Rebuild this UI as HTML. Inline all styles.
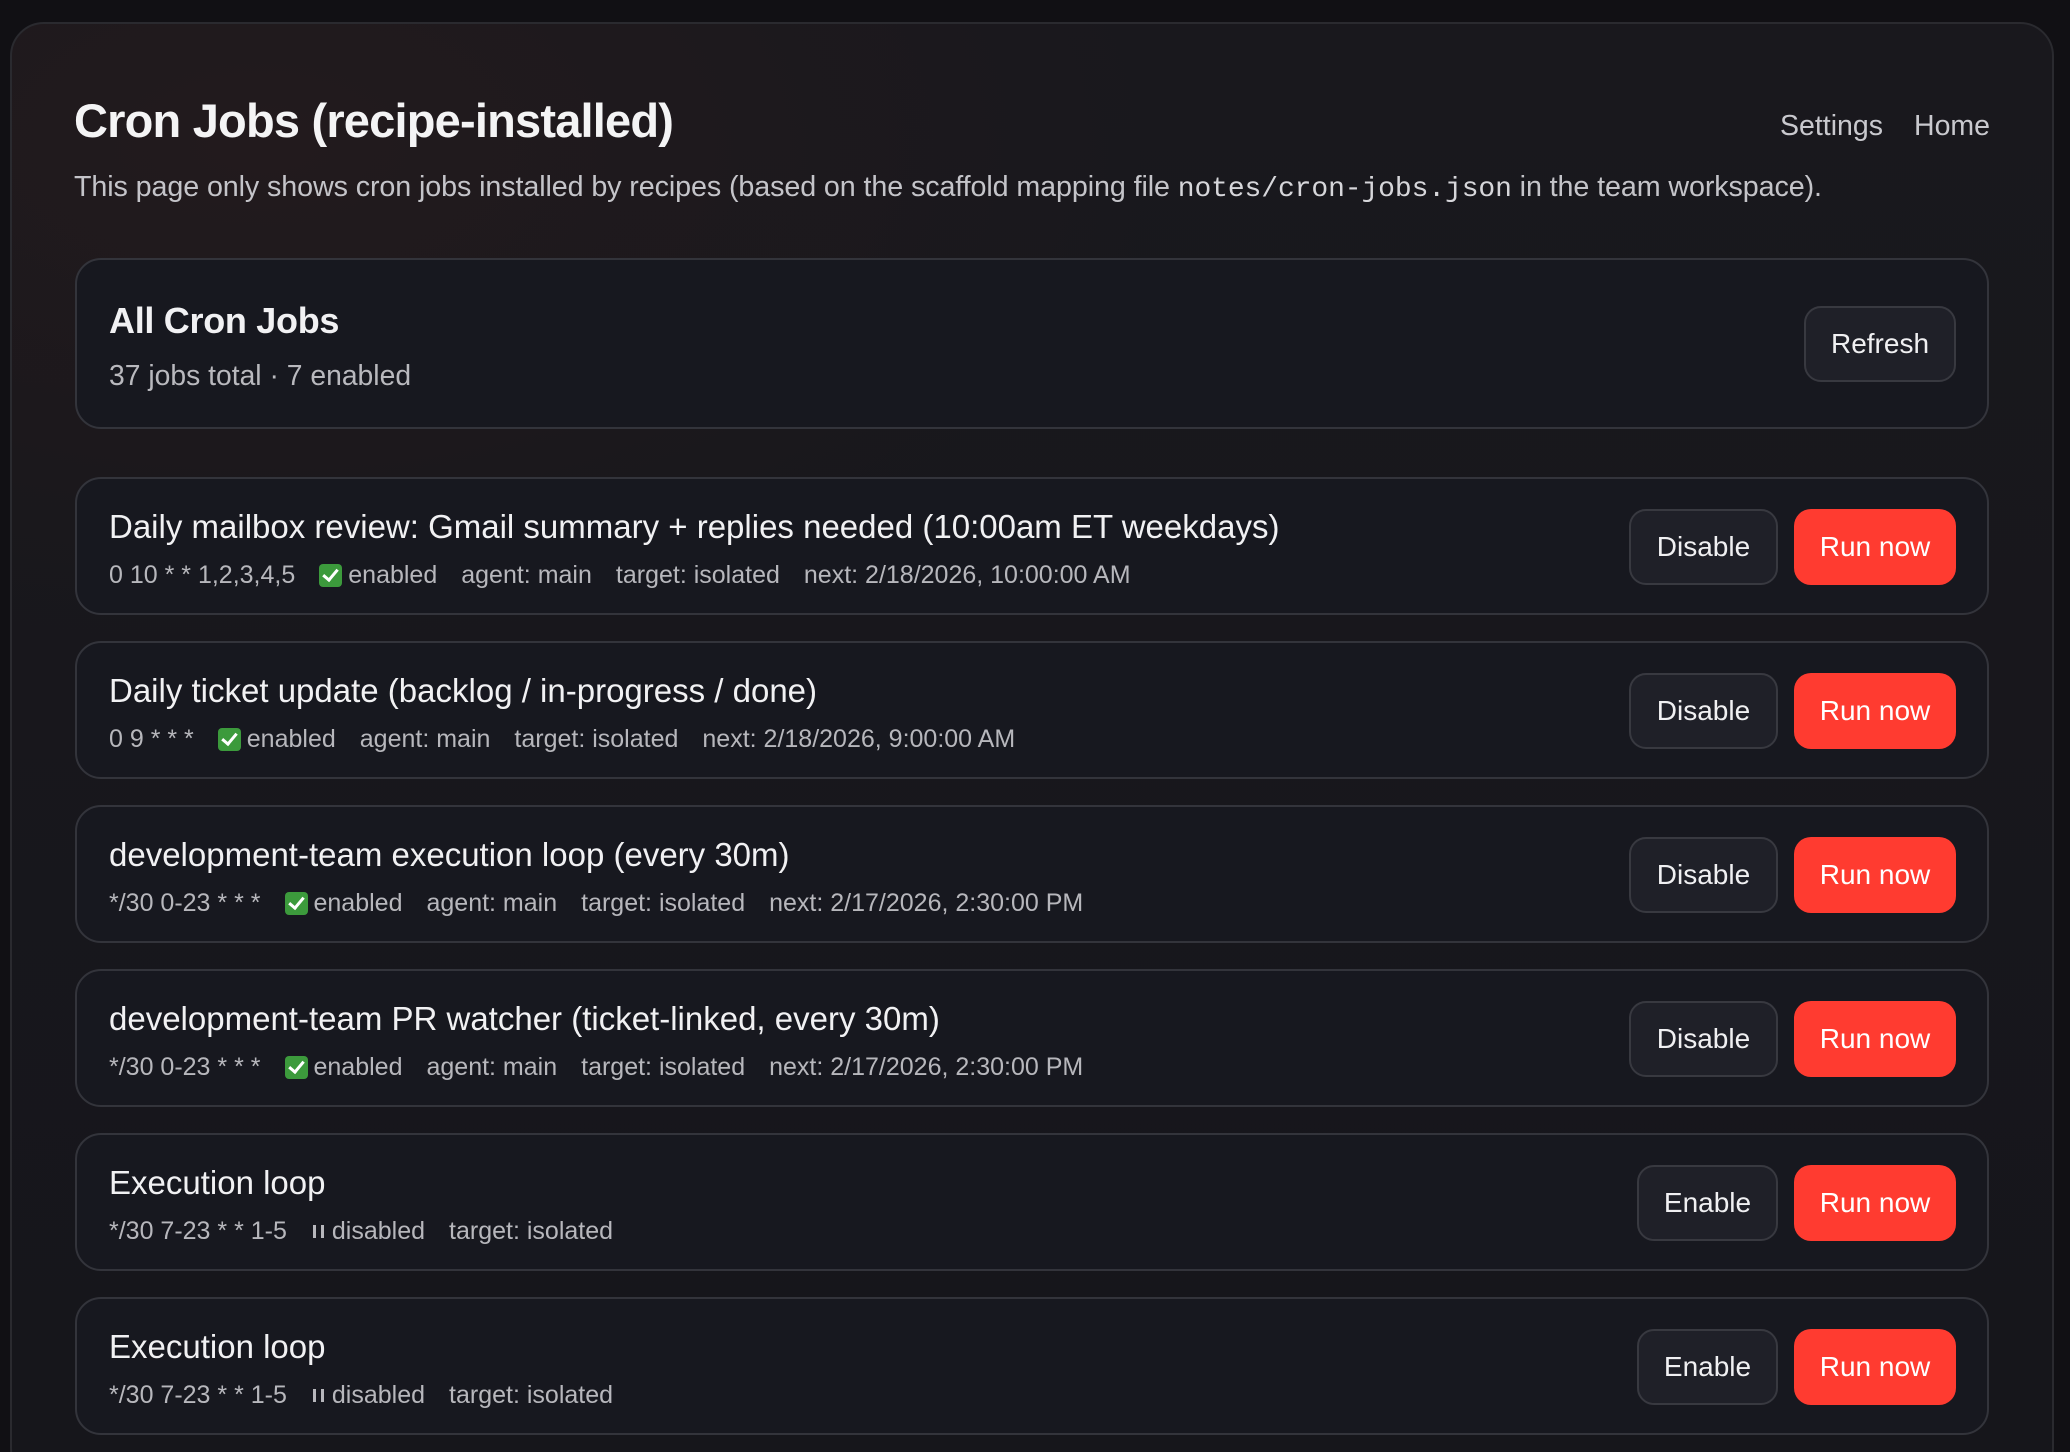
<!DOCTYPE html>
<html><head><meta charset="utf-8"><style>
*{box-sizing:border-box;margin:0;padding:0}
html,body{width:2070px;height:1452px;overflow:hidden}
body{background:#111014;font-family:"Liberation Sans",sans-serif;color:#f1f1f3;position:relative}
.outer{position:absolute;left:10px;top:22px;width:2044px;height:1460px;border:2px solid #2a2a2f;border-radius:34px;background:radial-gradient(ellipse 900px 500px at 250px 120px,#221a1d 0%,rgba(24,22,27,0) 100%),linear-gradient(180deg,#19181d,#16161b)}
.title{position:absolute;left:74px;top:93px;font-size:47px;font-weight:700;letter-spacing:-0.8px;color:#f4f4f5}
.nav{position:absolute;top:110px;font-size:28.5px;color:#c9c9ce}
.sub{position:absolute;left:74px;top:171px;font-size:28.7px;color:#c4c4c9;white-space:nowrap;letter-spacing:-0.1px}
.sub code{font-family:"Liberation Mono",monospace;font-size:28px;color:#d6d6da}
.card{position:absolute;left:75px;width:1914px;border:2px solid #33343b;border-radius:26px;background:#17181f}
.sum{top:258px;height:171px}
.sum h2{position:absolute;left:32px;top:40px;font-size:36px;font-weight:700;letter-spacing:-0.3px}
.sum p{position:absolute;left:32px;top:99px;font-size:28.3px;color:#b9b9be}
.btn{position:absolute;height:76px;border-radius:17px;font-size:28px;display:flex;align-items:center;justify-content:center;color:#f0f0f2}
.dark{background:#1f2028;border:2px solid #383940}
.red{background:#ff3b30;color:#fff}
.job{height:138px}
.job h3{position:absolute;left:32px;top:29px;font-size:33px;font-weight:400;white-space:nowrap}
.meta{position:absolute;left:32px;top:82px;font-size:25px;color:#b7b7bc;white-space:nowrap;display:flex;align-items:center}
.meta span{margin-right:24px;display:inline-flex;align-items:center}
.ck{display:inline-block;width:23px;height:23px;background:#3c9a3c;border-radius:4px;margin-right:6px;position:relative}
.ck:after{content:"";position:absolute;left:7px;top:2px;width:6px;height:12px;border:solid #fff;border-width:0 3px 3px 0;transform:rotate(40deg)}
.pz{display:inline-block;width:11px;height:13px;border-left:3.5px solid #b7b7bc;border-right:3.5px solid #b7b7bc;margin-right:8px;margin-left:2px}
</style></head><body>
<div class="outer"></div>
<div class="title">Cron Jobs (recipe-installed)</div>
<div class="nav" style="left:1780px">Settings</div>
<div class="nav" style="left:1914px">Home</div>
<div class="sub">This page only shows cron jobs installed by recipes (based on the scaffold mapping file <code>notes/cron-jobs.json</code> in the team workspace).</div>

<div class="card sum"><h2>All Cron Jobs</h2><p>37 jobs total · 7 enabled</p>
<div class="btn dark" style="left:1727px;top:46px;width:152px">Refresh</div></div>

<div class="card job" style="top:477px"><h3>Daily mailbox review: Gmail summary + replies needed (10:00am ET weekdays)</h3>
<div class="meta"><span>0 10 * * 1,2,3,4,5</span><span><i class="ck"></i>enabled</span><span>agent: main</span><span>target: isolated</span><span>next: 2/18/2026, 10:00:00 AM</span></div>
<div class="btn dark" style="left:1552px;top:30px;width:149px">Disable</div><div class="btn red" style="left:1717px;top:30px;width:162px">Run now</div></div>

<div class="card job" style="top:641px"><h3>Daily ticket update (backlog / in-progress / done)</h3>
<div class="meta"><span>0 9 * * *</span><span><i class="ck"></i>enabled</span><span>agent: main</span><span>target: isolated</span><span>next: 2/18/2026, 9:00:00 AM</span></div>
<div class="btn dark" style="left:1552px;top:30px;width:149px">Disable</div><div class="btn red" style="left:1717px;top:30px;width:162px">Run now</div></div>

<div class="card job" style="top:805px"><h3>development-team execution loop (every 30m)</h3>
<div class="meta"><span>*/30 0-23 * * *</span><span><i class="ck"></i>enabled</span><span>agent: main</span><span>target: isolated</span><span>next: 2/17/2026, 2:30:00 PM</span></div>
<div class="btn dark" style="left:1552px;top:30px;width:149px">Disable</div><div class="btn red" style="left:1717px;top:30px;width:162px">Run now</div></div>

<div class="card job" style="top:969px"><h3>development-team PR watcher (ticket-linked, every 30m)</h3>
<div class="meta"><span>*/30 0-23 * * *</span><span><i class="ck"></i>enabled</span><span>agent: main</span><span>target: isolated</span><span>next: 2/17/2026, 2:30:00 PM</span></div>
<div class="btn dark" style="left:1552px;top:30px;width:149px">Disable</div><div class="btn red" style="left:1717px;top:30px;width:162px">Run now</div></div>

<div class="card job" style="top:1133px"><h3>Execution loop</h3>
<div class="meta"><span>*/30 7-23 * * 1-5</span><span><i class="pz"></i>disabled</span><span>target: isolated</span></div>
<div class="btn dark" style="left:1560px;top:30px;width:141px">Enable</div><div class="btn red" style="left:1717px;top:30px;width:162px">Run now</div></div>

<div class="card job" style="top:1297px"><h3>Execution loop</h3>
<div class="meta"><span>*/30 7-23 * * 1-5</span><span><i class="pz"></i>disabled</span><span>target: isolated</span></div>
<div class="btn dark" style="left:1560px;top:30px;width:141px">Enable</div><div class="btn red" style="left:1717px;top:30px;width:162px">Run now</div></div>
</body></html>
